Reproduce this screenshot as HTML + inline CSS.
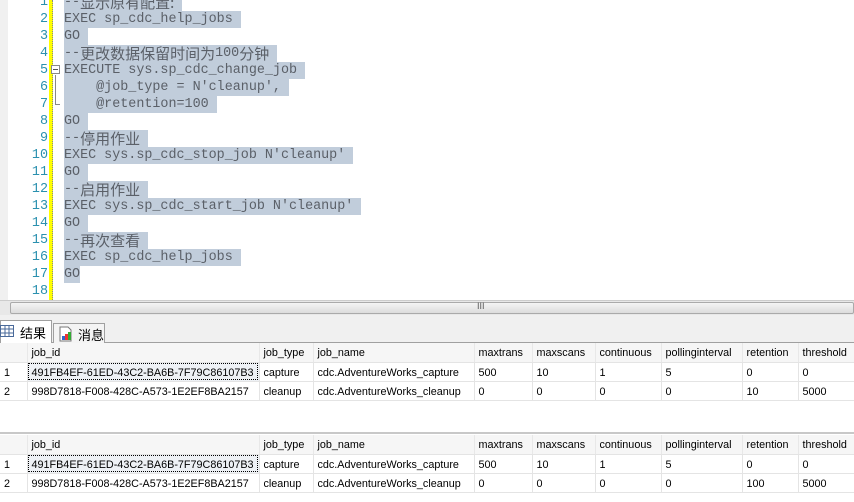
<!DOCTYPE html>
<html><head><meta charset="utf-8"><style>
*{margin:0;padding:0;box-sizing:border-box}
body{width:854px;height:502px;overflow:hidden;background:#fff;position:relative;font-family:"Liberation Sans","Noto Sans CJK SC",sans-serif}
.gut{position:absolute;left:0;top:0;width:8px;height:300px;background:#f0f0f0}
.yb{position:absolute;left:49px;top:0;width:4px;height:300px;background:#ffff00;border-right:1px dotted #888}
.ln{position:absolute;left:0;width:48px;text-align:right;font:13.4px "Liberation Mono",monospace;color:#2b91af;height:17px;line-height:17px}
.cl{position:absolute;left:64px;height:17px;line-height:17px;font:13.4px "Liberation Mono","Noto Sans CJK SC",monospace;color:#5b6068;white-space:pre;overflow:hidden}
.cl span{background:#c1cddb;display:inline-block;height:17px;line-height:17px;vertical-align:top;overflow:hidden}
.cj{font-family:"Noto Sans CJK SC",sans-serif;font-size:15px;font-weight:normal;line-height:17px;display:inline-block;vertical-align:top;height:17px}
.sb{position:absolute;left:0;top:300px;width:854px;height:15px;background:#e8e8e8;border-top:1px solid #ccc}
.sb div{position:absolute;left:10px;top:1px;right:0;height:12px;background:linear-gradient(#f4f4f4,#dcdcdc);border:1px solid #aaa;border-radius:2px}
.tabs{position:absolute;left:0;top:315px;width:854px;height:28px;background:#f0f0f0;border-bottom:1px solid #a0a0a0}
.t1{position:absolute;left:0;top:5px;width:52px;height:23px;background:#fff;border:1px solid #a0a0a0;border-bottom:none;font-size:13px;padding:2px 0 0 19px;white-space:nowrap}
.t2{position:absolute;left:53px;top:8px;width:52px;height:20px;background:#f4f4f4;border:1px solid #a0a0a0;border-bottom:none;font-size:13px;padding:1px 0 0 24px;white-space:nowrap}
table{position:absolute;left:0;border-collapse:collapse;font-size:10.8px;color:#000;table-layout:fixed;width:854px}
td{height:19px;padding:2px 4px 0;border-right:1px solid #e4e4e4;border-bottom:1px solid #e4e4e4;white-space:nowrap;overflow:hidden}
tr.h td{background:#f6f6f6;border-right:1px solid #e8e8e8}
.sel{outline:1px dotted #000;outline-offset:-2px;background:#eef1f5}
</style></head><body>
<div class="gut"></div><div class="yb"></div>
<div class="ln" style="top:-6px">1</div><div class="ln" style="top:11px">2</div><div class="ln" style="top:28px">3</div><div class="ln" style="top:45px">4</div><div class="ln" style="top:62px">5</div><div class="ln" style="top:79px">6</div><div class="ln" style="top:96px">7</div><div class="ln" style="top:113px">8</div><div class="ln" style="top:130px">9</div><div class="ln" style="top:147px">10</div><div class="ln" style="top:164px">11</div><div class="ln" style="top:181px">12</div><div class="ln" style="top:198px">13</div><div class="ln" style="top:215px">14</div><div class="ln" style="top:232px">15</div><div class="ln" style="top:249px">16</div><div class="ln" style="top:266px">17</div><div class="ln" style="top:283px">18</div>
<div style="position:absolute;left:51px;top:65px;width:9px;height:9px;border:1px solid #888;background:#fff"><div style="position:absolute;left:1px;top:3px;width:5px;height:1px;background:#555"></div></div>
<div style="position:absolute;left:55px;top:75px;width:1px;height:30px;background:#888"></div>
<div style="position:absolute;left:55px;top:104px;width:5px;height:1px;background:#888"></div>
<div class="cl" style="top:-6px"><span>--<b class="cj">显示原有配置:</b> </span></div>
<div class="cl" style="top:11px"><span>EXEC sp_cdc_help_jobs </span></div>
<div class="cl" style="top:28px"><span>GO </span></div>
<div class="cl" style="top:45px"><span>--<b class="cj">更改数据保留时间为</b>100<b class="cj">分钟</b> </span></div>
<div class="cl" style="top:62px"><span>EXECUTE sys.sp_cdc_change_job </span></div>
<div class="cl" style="top:79px"><span>    @job_type = N'cleanup', </span></div>
<div class="cl" style="top:96px"><span>    @retention=100 </span></div>
<div class="cl" style="top:113px"><span>GO </span></div>
<div class="cl" style="top:130px"><span>--<b class="cj">停用作业</b> </span></div>
<div class="cl" style="top:147px"><span>EXEC sys.sp_cdc_stop_job N'cleanup' </span></div>
<div class="cl" style="top:164px"><span>GO </span></div>
<div class="cl" style="top:181px"><span>--<b class="cj">启用作业</b> </span></div>
<div class="cl" style="top:198px"><span>EXEC sys.sp_cdc_start_job N'cleanup' </span></div>
<div class="cl" style="top:215px"><span>GO </span></div>
<div class="cl" style="top:232px"><span>--<b class="cj">再次查看</b> </span></div>
<div class="cl" style="top:249px"><span>EXEC sp_cdc_help_jobs </span></div>
<div class="cl" style="top:266px"><span>GO</span></div>
<div class="sb"><div><span style="position:absolute;left:466px;top:-2px;font-size:9px;color:#555">III</span></div></div>
<div class="tabs">
<div class="t1"><svg style="position:absolute;left:-1px;top:4px" width="14" height="12"><rect x=".5" y=".5" width="13" height="11" fill="#fff" stroke="#4a6a9a"/><path d="M0 4h14M0 8h14M5 0v12M9 0v12" stroke="#4a6a9a"/></svg>结果</div>
<div class="t2"><svg style="position:absolute;left:4px;top:2px" width="16" height="16"><path d="M2 1h8l3 3v11H2z" fill="#fff" stroke="#777"/><rect x="7" y="8" width="3" height="6" fill="#e33"/><rect x="10" y="6" width="3" height="8" fill="#3a3"/><rect x="4" y="10" width="3" height="4" fill="#36c"/></svg>消息</div>
</div>
<table style="top:343px">
<colgroup><col style="width:27px"><col style="width:232px"><col style="width:54px"><col style="width:161px"><col style="width:58px"><col style="width:63px"><col style="width:66px"><col style="width:81px"><col style="width:56px"><col style="width:56px"></colgroup>
<tr class="h"><td></td><td>job_id</td><td>job_type</td><td>job_name</td><td>maxtrans</td><td>maxscans</td><td>continuous</td><td>pollinginterval</td><td>retention</td><td>threshold</td></tr>
<tr><td>1</td><td class="sel">491FB4EF-61ED-43C2-BA6B-7F79C86107B3</td><td>capture</td><td>cdc.AdventureWorks_capture</td><td>500</td><td>10</td><td>1</td><td>5</td><td>0</td><td>0</td></tr>
<tr><td>2</td><td>998D7818-F008-428C-A573-1E2EF8BA2157</td><td>cleanup</td><td>cdc.AdventureWorks_cleanup</td><td>0</td><td>0</td><td>0</td><td>0</td><td>10</td><td>5000</td></tr>
</table>
<div style="position:absolute;left:0;top:432px;width:854px;height:2px;background:#c8c8c8"></div>
<table style="top:435px">
<colgroup><col style="width:27px"><col style="width:232px"><col style="width:54px"><col style="width:161px"><col style="width:58px"><col style="width:63px"><col style="width:66px"><col style="width:81px"><col style="width:56px"><col style="width:56px"></colgroup>
<tr class="h"><td></td><td>job_id</td><td>job_type</td><td>job_name</td><td>maxtrans</td><td>maxscans</td><td>continuous</td><td>pollinginterval</td><td>retention</td><td>threshold</td></tr>
<tr><td>1</td><td class="sel">491FB4EF-61ED-43C2-BA6B-7F79C86107B3</td><td>capture</td><td>cdc.AdventureWorks_capture</td><td>500</td><td>10</td><td>1</td><td>5</td><td>0</td><td>0</td></tr>
<tr><td>2</td><td>998D7818-F008-428C-A573-1E2EF8BA2157</td><td>cleanup</td><td>cdc.AdventureWorks_cleanup</td><td>0</td><td>0</td><td>0</td><td>0</td><td>100</td><td>5000</td></tr>
</table>
</body></html>
